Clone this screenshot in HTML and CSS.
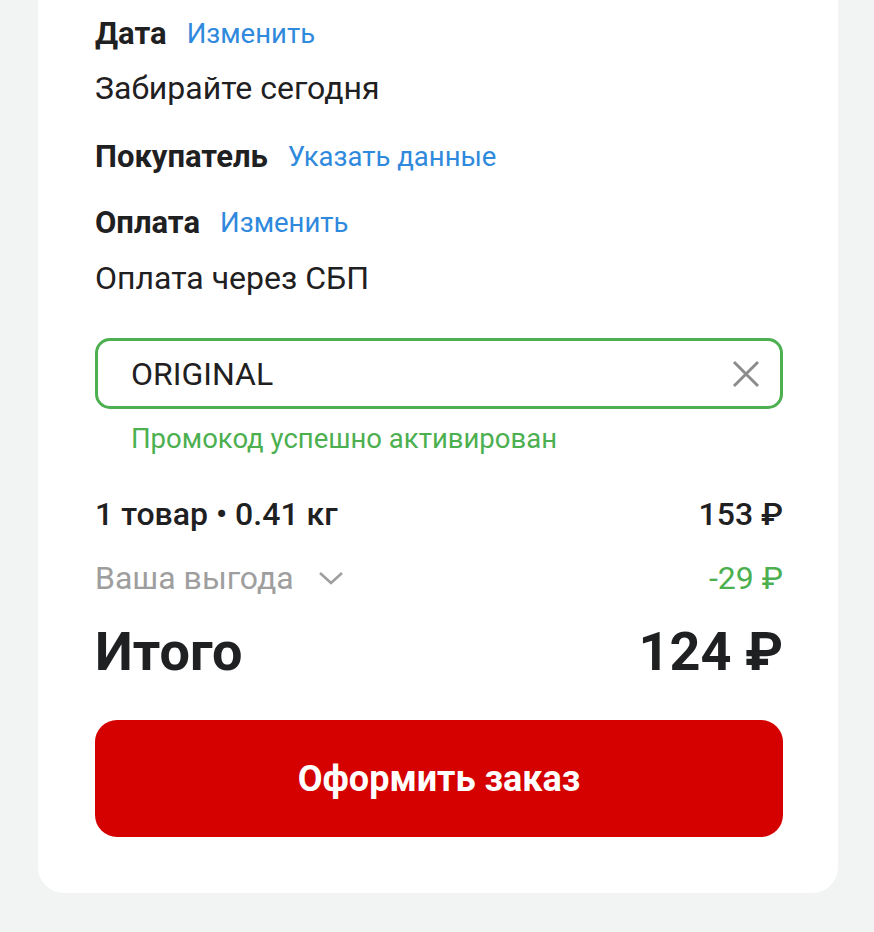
FILE: index.html
```html
<!DOCTYPE html>
<html lang="ru">
<head>
<meta charset="utf-8">
<link rel="stylesheet" href="styles.css">
</head>
<body>
<div class="page">
  <div class="card">
    <div class="field-head"><span class="label">Дата</span><span class="link">Изменить</span></div>
    <div class="field-value v1">Забирайте сегодня</div>
    <div class="field-head h2"><span class="label">Покупатель</span><span class="link">Указать данные</span></div>
    <div class="field-head h3"><span class="label">Оплата</span><span class="link">Изменить</span></div>
    <div class="field-value v2">Оплата через СБП</div>

    <div class="promo">
      <span class="promo-code">ORIGINAL</span>
      <svg class="clear" width="30" height="30" viewBox="0 0 30 30"><path d="M3 3 L27 27 M27 3 L3 27" stroke="#8c8c8c" stroke-width="3" fill="none"/></svg>
    </div>
    <div class="promo-msg">Промокод успешно активирован</div>

    <div class="row items"><span>1 товар • 0.41 кг</span><span>153 ₽</span></div>
    <div class="row benefit">
      <span class="benefit-label">Ваша выгода
        <svg class="chev" width="26" height="16" viewBox="0 0 26 16"><path d="M2 3 L13 13 L24 3" stroke="#9e9e9e" stroke-width="2.5" fill="none"/></svg>
      </span>
      <span class="discount">-29 ₽</span>
    </div>
    <div class="row total"><span>Итого</span><span>124 ₽</span></div>

    <button class="submit">Оформить заказ</button>
  </div>
</div>
</body>
</html>
```

FILE: styles.css
```css
html, body {
  margin: 0;
  padding: 0;
  background: #f2f4f3;
  font-family: Roboto, "Noto Sans", sans-serif;
  color: #1f2021;
}
.page {
  padding: 0 36px 0 38px;
  height: 932px;
  box-sizing: border-box;
}
.card {
  background: #fff;
  border-radius: 0 0 26px 26px;
  padding: 0 55px 56px 57px;
  display: flex;
  flex-direction: column;
}
.field-head {
  display: flex;
  align-items: center;
  gap: 20px;
  height: 40px;
  margin-top: 13px;
}
.field-head.h2 { margin-top: 28px; }
.field-head.h3 { margin-top: 26px; }
.label {
  font-weight: 700;
  font-size: 31px;
}
.link {
  color: #2f89dc;
  font-size: 27.5px;
}
.field-value {
  height: 40px;
  line-height: 40px;
  font-size: 32px;
  margin-top: 15px;
}
.field-value.v2 { margin-top: 16px; }
.promo {
  margin-top: 40px;
  height: 71px;
  box-sizing: border-box;
  border: 3px solid #4caf50;
  border-radius: 15px;
  display: flex;
  align-items: center;
  justify-content: space-between;
  padding: 0 19px 0 33px;
}
.promo-code {
  font-size: 32px;
  color: #1f2021;
}
.promo-msg {
  margin-top: 12px;
  height: 36px;
  line-height: 36px;
  padding-left: 36px;
  font-size: 27.5px;
  color: #4caf50;
}
.row {
  display: flex;
  justify-content: space-between;
  align-items: center;
}
.items {
  margin-top: 37px;
  height: 40px;
  font-size: 32px;
  font-weight: 500;
}
.benefit {
  margin-top: 24px;
  height: 40px;
  font-size: 32px;
}
.benefit-label {
  color: #9e9e9e;
  display: flex;
  align-items: center;
  gap: 24px;
}
.discount { color: #4caf50; }
.total {
  margin-top: 23px;
  height: 60px;
  font-size: 54px;
  font-weight: 700;
}
.submit {
  margin-top: 39px;
  height: 117px;
  border: none;
  border-radius: 22px;
  background: #d50000;
  color: #fff;
  font-family: Roboto, "Noto Sans", sans-serif;
  font-size: 36px;
  font-weight: 700;
}
```
